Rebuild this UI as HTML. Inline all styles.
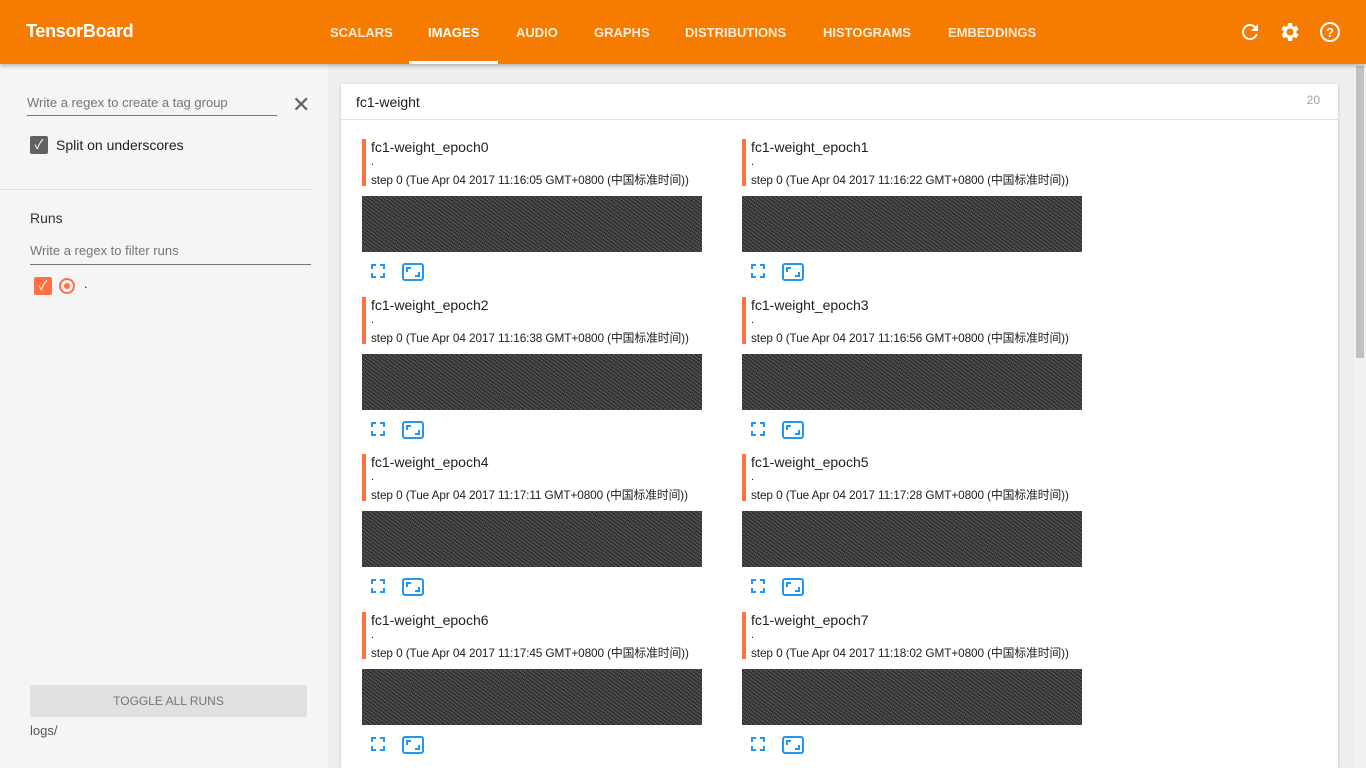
<!DOCTYPE html>
<html style="overflow:hidden;height:768px"><head><meta charset="utf-8"><style>
*{margin:0;padding:0;box-sizing:border-box}
body{width:1366px;height:768px;overflow:hidden;font-family:"Liberation Sans","Noto Sans CJK SC",sans-serif;background:#eeeeee;position:relative;color:#212121}
.hdr{position:absolute;left:0;top:0;width:1366px;height:64px;background:#f57c00;box-shadow:0 2px 4px rgba(0,0,0,.25);z-index:2}
.logo{position:absolute;left:26px;top:21px;color:#fff;font-size:18px;font-weight:bold;letter-spacing:-.3px}
.tab{position:absolute;top:25px;color:rgba(255,255,255,.85);font-size:13px;font-weight:bold}
.sel{color:#fff}
.side{position:absolute;left:0;top:64px;width:328px;height:704px;background:#f5f5f5}
.card{position:absolute;left:341px;top:84px;width:997px;height:684px;background:#fff;box-shadow:0 1px 3px rgba(0,0,0,.2)}
.cardh{position:absolute;left:0;top:0;width:997px;height:36px;border-bottom:1px solid #e0e0e0}
.cell{position:absolute;width:345px}
.bar{position:absolute;left:0;top:0;width:4px;height:47px;background:#ff7043}
.t1{position:absolute;left:9px;top:0px;font-size:14px}
.t2{position:absolute;left:9px;top:17px;font-size:11px}
.t3{position:absolute;left:9px;top:32px;font-size:11.8px;white-space:nowrap;letter-spacing:-.1px}
.img{position:absolute;left:0;top:57px;width:340px;height:56px;background-color:#3e3e3e;background-image:repeating-linear-gradient(37deg,rgba(255,255,255,.18) 0 1px,transparent 1px 3px),repeating-linear-gradient(-61deg,rgba(0,0,0,.35) 0 1px,transparent 1px 2px)}
.ic{position:absolute;top:124px}
</style></head><body>
<div class="hdr">
<div class="logo">TensorBoard</div>
<div class="tab" style="left:330px">SCALARS</div>
<div class="tab sel" style="left:428px">IMAGES</div>
<div style="position:absolute;left:409px;top:61px;width:89px;height:3px;background:#fff"></div>
<div class="tab" style="left:516px">AUDIO</div>
<div class="tab" style="left:594px">GRAPHS</div>
<div class="tab" style="left:685px">DISTRIBUTIONS</div>
<div class="tab" style="left:823px">HISTOGRAMS</div>
<div class="tab" style="left:948px">EMBEDDINGS</div>
<svg style="position:absolute;left:1238px;top:20px" width="24" height="24" viewBox="0 0 24 24"><path fill="#fff" d="M17.65 6.35A7.96 7.96 0 0 0 12 4a8 8 0 1 0 7.73 10h-2.08A6 6 0 1 1 12 6c1.66 0 3.140.69 4.22 1.78L13 11h7V4l-2.35 2.35z"/></svg>
<svg style="position:absolute;left:1278px;top:20px" width="24" height="24" viewBox="0 0 24 24"><path fill="#fff" d="M19.4 13a7.5 7.5 0 0 0 0-2l2.1-1.6-2-3.5-2.5 1a7.3 7.3 0 0 0-1.7-1L15 3h-4l-.4 2.9a7.3 7.3 0 0 0-1.7 1l-2.5-1-2 3.5L6.6 11a7.5 7.5 0 0 0 0 2l-2.1 1.6 2 3.5 2.5-1c.5.4 1.1.7 1.7 1L11 21h4l.4-2.9c.6-.3 1.2-.6 1.7-1l2.5 1 2-3.5L19.4 13zM13 15.5a3.5 3.5 0 1 1 0-7 3.5 3.5 0 0 1 0 7z" transform="translate(-1 0)"/></svg>
<svg style="position:absolute;left:1318px;top:20px" width="24" height="24" viewBox="0 0 24 24"><circle cx="12" cy="12" r="9" fill="none" stroke="#fff" stroke-width="2"/><text x="12" y="17" font-size="13" font-weight="bold" fill="#fff" text-anchor="middle" font-family="Liberation Sans">?</text></svg>
</div>
<div class="side">
<div style="position:absolute;left:27px;top:31px;font-size:13px;color:#757575">Write a regex to create a tag group</div>
<div style="position:absolute;left:27px;top:51px;width:250px;height:1px;background:#757575"></div>
<div style="position:absolute;left:292px;top:28px;font-size:22px;color:#616161">✕</div>
<div style="position:absolute;left:30px;top:72px;width:18px;height:18px;background:#616161;border-radius:2px;color:#fff;font-size:13px;text-align:center;line-height:18px">✓</div>
<div style="position:absolute;left:56px;top:73px;font-size:14px">Split on underscores</div>
<div style="position:absolute;left:0;top:125px;width:311px;height:1px;background:#ddd"></div>
<div style="position:absolute;left:30px;top:146px;font-size:14px;color:#333">Runs</div>
<div style="position:absolute;left:30px;top:179px;font-size:13px;color:#757575">Write a regex to filter runs</div>
<div style="position:absolute;left:30px;top:200px;width:281px;height:1px;background:#757575"></div>
<div style="position:absolute;left:34px;top:213px;width:18px;height:18px;background:#ff7043;border-radius:2px;color:#fff;font-size:13px;text-align:center;line-height:18px">✓</div>
<div style="position:absolute;left:59px;top:214px;width:16px;height:16px;border:2px solid #ff7043;border-radius:50%"><div style="margin:3px;width:6px;height:6px;border-radius:50%;background:#ff7043"></div></div>
<div style="position:absolute;left:84px;top:212px;font-size:13px">.</div>
<div style="position:absolute;left:30px;top:621px;width:277px;height:32px;background:#e0e0e0;border-radius:2px;text-align:center;line-height:32px;font-size:12px;color:#757575">TOGGLE ALL RUNS</div>
<div style="position:absolute;left:30px;top:659px;font-size:13px;color:#555">logs/</div>
</div>
<div class="card">
<div class="cardh"><div style="position:absolute;left:15px;top:10px;font-size:14px">fc1-weight</div><div style="position:absolute;right:18px;top:9px;font-size:12px;color:#9e9e9e">20</div></div>
</div>
<div id="cells"></div>
<div style="position:absolute;left:1354px;top:64px;width:12px;height:704px;background:#f1f1f1"></div>
<div style="position:absolute;left:1356px;top:66px;width:8px;height:292px;background:#c1c1c1"></div>
<script>
var d=[["11:16:05","11:16:22"],["11:16:38","11:16:56"],["11:17:11","11:17:28"],["11:17:45","11:18:02"]];
var ys=[139,297,454,612],h="";
for(var r=0;r<4;r++)for(var c=0;c<2;c++){var n=r*2+c;
h+='<div class="cell" style="left:'+(c?742:362)+'px;top:'+ys[r]+'px"><div class="bar"></div><div class="t1">fc1-weight_epoch'+n+'</div><div class="t2">.</div><div class="t3">step 0 (Tue Apr 04 2017 '+d[r][c]+' GMT+0800 (中国标准时间))</div><div class="img"></div>'+
'<svg class="ic" style="left:8px" width="16" height="16" viewBox="0 0 16 16"><path d="M2 6V2h4M10 2h4v4M14 10v4h-4M6 14H2v-4" fill="none" stroke="#2196f3" stroke-width="2"/></svg>'+
'<svg class="ic" style="left:40px" width="22" height="18" viewBox="0 0 22 18"><rect x="1" y="1" width="20" height="16" rx="2" fill="none" stroke="#2196f3" stroke-width="2"/><path d="M5 9V5h4M17 9v4h-4" fill="none" stroke="#2196f3" stroke-width="2"/></svg></div>';}
document.getElementById("cells").innerHTML=h;
</script>
</body></html>
